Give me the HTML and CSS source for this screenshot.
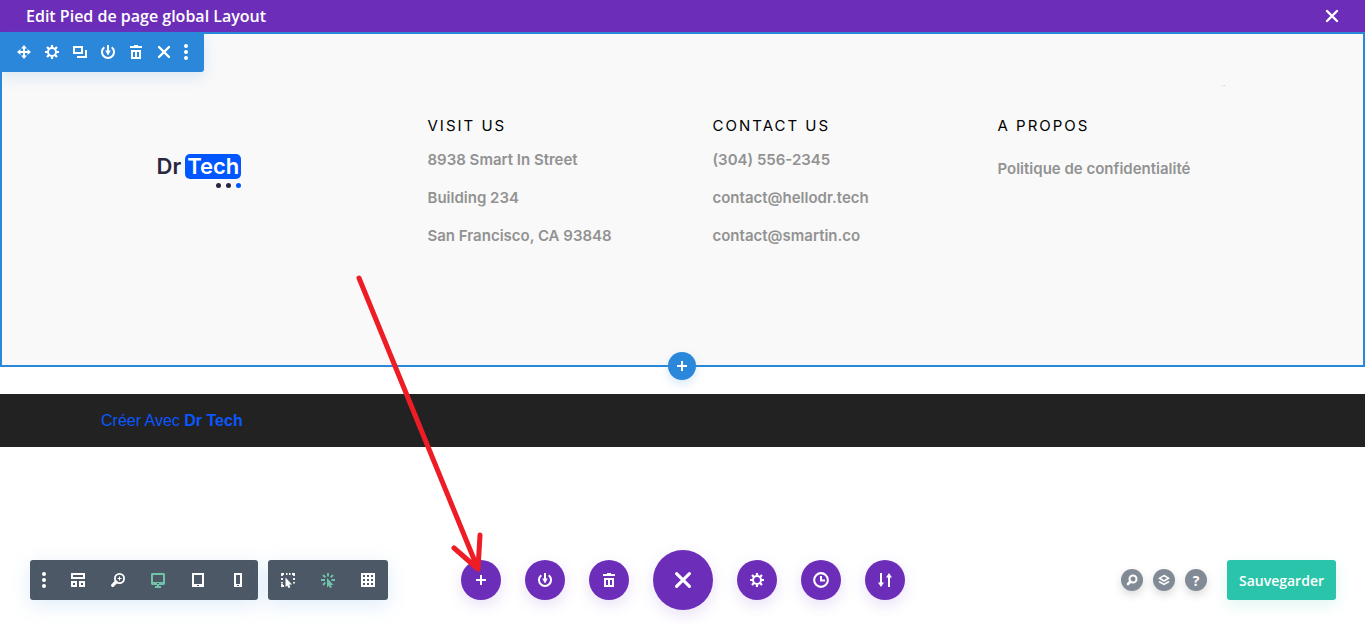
FILE: index.html
```html
<!DOCTYPE html>
<html lang="fr">
<head>
    <meta charset="UTF-8">
    <meta name="viewport" content="width=device-width, initial-scale=1.0">
    <title>Edit Pied de page global Layout</title>
    <link rel="stylesheet" href="styles.css">
</head>
<body>
    <svg class="sprite" aria-hidden="true">
        <symbol id="i-move" viewBox="0 0 14 14">
            <path d="M7 2v10M2 7h10" stroke="currentColor" stroke-width="2"/>
            <path d="M7 0l3 3.500H4zM7 14l3-3.500H4zM0 7l3.500-3v6zM14 7l-3.500-3v6z" fill="currentColor"/>
        </symbol>
        <symbol id="i-gear" viewBox="0 0 14 14">
            <circle cx="7" cy="7" r="4" fill="none" stroke="currentColor" stroke-width="2"/>
            <path d="M7 0v2.500M7 11.500V14M0 7h2.500M11.500 7H14M2 2l2 2M10 10l2 2M12 2l-2 2M4 10l-2 2" stroke="currentColor" stroke-width="2.200"/>
        </symbol>
        <symbol id="i-copy" viewBox="0 0 14 14">
            <path d="M1 2h8v6H1zM13 5v7H4" fill="none" stroke="currentColor" stroke-width="2"/>
        </symbol>
        <symbol id="i-power" viewBox="0 0 14 14">
            <path d="M3.300 2.200A6 6 0 1 0 10.700 2.200" fill="none" stroke="currentColor" stroke-width="2"/>
            <path d="M6 0h2v5.500h1.800L7 10.500 4.200 5.500H6z" fill="currentColor"/>
        </symbol>
        <symbol id="i-trash" viewBox="0 0 14 14">
            <path d="M5 0h4v1h4v2H1V1h4zM2 5h10v9H2zM4 7v5h2V7zM8 7v5h2V7z" fill="currentColor" fill-rule="evenodd"/>
        </symbol>
        <symbol id="i-close" viewBox="0 0 14 14">
            <path d="M2 2l10 10M12 2L2 12" stroke="currentColor" stroke-width="2.400" stroke-linecap="round"/>
        </symbol>
        <symbol id="i-dots" viewBox="0 0 4 16">
            <g fill="currentColor"><circle cx="2" cy="2" r="2"/><circle cx="2" cy="8" r="2"/><circle cx="2" cy="14" r="2"/></g>
        </symbol>
        <symbol id="i-plus" viewBox="0 0 14 14">
            <path d="M7 2v10M2 7h10" stroke="currentColor" stroke-width="2"/>
        </symbol>
        <symbol id="i-wire" viewBox="0 0 14 14">
            <path d="M1 1h12v4H1zM1 9h4v4H1zM9 9h4v4H9z" fill="none" stroke="currentColor" stroke-width="2"/>
        </symbol>
        <symbol id="i-zoom" viewBox="0 0 14 14">
            <circle cx="8.500" cy="5.500" r="4.600" fill="none" stroke="currentColor" stroke-width="1.800"/>
            <path d="M8.500 3.500v4M6.500 5.500h4" stroke="currentColor"/>
            <path d="M5 9l-3.300 3.300" stroke="currentColor" stroke-width="3.200" stroke-linecap="round"/>
        </symbol>
        <symbol id="i-desktop" viewBox="0 0 14 16">
            <path d="M1 1h12l1 1v10l-1 1H8v1h2v2H4v-2h2v-1H1l-1-1V2zM2 3v7h10V3zM6 11v1h2v-1z" fill="currentColor" fill-rule="evenodd"/>
        </symbol>
        <symbol id="i-tablet" viewBox="0 0 14 14">
            <path d="M1 0h12v14H1zM3 2v9h8V2zM6 12v1h2v-1z" fill="currentColor" fill-rule="evenodd"/>
        </symbol>
        <symbol id="i-phone" viewBox="0 0 14 14">
            <path d="M3 0h8v14H3zM5 2v9h4V2zM6 12v1h2v-1z" fill="currentColor" fill-rule="evenodd"/>
        </symbol>
        <symbol id="i-select" viewBox="0 0 14 16">
            <path d="M1 4V2h2M5 2h1.500M8 2h1.500M11 2h2v2M13 6v2M13 10v1.500M1 6v2M1 10v1.500M1 12v2h2" fill="none" stroke="currentColor" stroke-width="1.800"/>
            <path d="M4.500 5.500v9.500l1.700-1.600 1.200 2.600 2-.8-1.200-2.600h2.800z" fill="currentColor"/>
        </symbol>
        <symbol id="i-click" viewBox="0 0 14 16">
            <path d="M7 1v3.500M0 8h4M10.500 8H14M2 3l2.300 2.300M12 3L9.700 5.300M2 13l2.300-2.300" stroke="currentColor" stroke-width="1.900"/>
            <path d="M6 6v9.500l1.800-1.700L9 16l2-.8-1.200-2.200h2.700z" fill="currentColor"/>
        </symbol>
        <symbol id="i-grid" viewBox="0 0 14 14">
            <path d="M0 0h14v14H0zM2 2v2h2V2zM6 2v2h2V2zM10 2v2h2V2zM2 6v2h2V6zM6 6v2h2V6zM10 6v2h2V6zM2 10v2h2v-2zM6 10v2h2v-2zM10 10v2h2v-2z" fill="currentColor" fill-rule="evenodd"/>
        </symbol>
        <symbol id="i-clock" viewBox="0 0 14 14">
            <circle cx="7" cy="7" r="6" fill="none" stroke="currentColor" stroke-width="1.800"/>
            <path d="M7 3.500v4h3.500" fill="none" stroke="currentColor" stroke-width="1.800"/>
        </symbol>
        <symbol id="i-sort" viewBox="0 0 14 14">
            <path d="M3 0v11M11 3v11" stroke="currentColor" stroke-width="2"/>
            <path d="M0 9.500h6L3 14zM8 4.500h6L11 0z" fill="currentColor"/>
        </symbol>
        <symbol id="i-search" viewBox="0 0 14 14">
            <circle cx="8" cy="6" r="3.500" fill="none" stroke="currentColor" stroke-width="2"/>
            <path d="M5.500 8.500L3 11" stroke="currentColor" stroke-width="2.600" stroke-linecap="round"/>
        </symbol>
        <symbol id="i-layers" viewBox="0 0 14 14">
            <path d="M7 2.500l4.500 2.700L7 8 2.500 5.200z" fill="none" stroke="currentColor" stroke-width="1.500"/>
            <path d="M2 8.500l5 3 5-3" fill="none" stroke="currentColor" stroke-width="1.500"/>
        </symbol>
    </svg>

    <header class="topbar">
        <h1>Edit Pied de page global Layout</h1>
        <button type="button" aria-label="Fermer"><svg class="icon"><use href="#i-close"/></svg></button>
    </header>

    <main>
        <section class="section">
            <div class="section-tools">
                <button type="button" aria-label="Déplacer"><svg class="icon"><use href="#i-move"/></svg></button>
                <button type="button" aria-label="Réglages"><svg class="icon"><use href="#i-gear"/></svg></button>
                <button type="button" aria-label="Dupliquer"><svg class="icon"><use href="#i-copy"/></svg></button>
                <button type="button" aria-label="Enregistrer"><svg class="icon"><use href="#i-power"/></svg></button>
                <button type="button" aria-label="Supprimer"><svg class="icon"><use href="#i-trash"/></svg></button>
                <button type="button" aria-label="Fermer"><svg class="icon"><use href="#i-close"/></svg></button>
                <button type="button" class="more" aria-label="Plus"><svg class="icon icon-dots"><use href="#i-dots"/></svg></button>
            </div>

            <div class="row">
                <div class="logo">
                    <div class="logo-name">Dr <span>Tech</span></div>
                    <div class="logo-dots"><i></i><i></i><i></i></div>
                </div>
                <div class="col">
                    <h2>Visit us</h2>
                    <p>8938 Smart In Street</p>
                    <p>Building 234</p>
                    <p>San Francisco, CA 93848</p>
                </div>
                <div class="col">
                    <h2>Contact us</h2>
                    <p>(304) 556-2345</p>
                    <p>contact@hellodr.tech</p>
                    <p>contact@smartin.co</p>
                </div>
                <div class="col">
                    <h2>A propos</h2>
                    <p class="policy"><a href="#">Politique de confidentialité</a></p>
                </div>
            </div>

            <button type="button" class="add-section" aria-label="Ajouter une section"><svg class="icon"><use href="#i-plus"/></svg></button>
        </section>

        <div class="credits"><a href="#">Créer Avec <strong>Dr Tech</strong></a></div>
    </main>

    <footer class="builder-bar">
        <div class="views">
            <div class="group">
                <button type="button" class="more" aria-label="Plus"><svg class="icon icon-dots"><use href="#i-dots"/></svg></button>
                <button type="button" aria-label="Filaire"><svg class="icon"><use href="#i-wire"/></svg></button>
                <button type="button" aria-label="Zoom"><svg class="icon"><use href="#i-zoom"/></svg></button>
                <button type="button" class="active" aria-label="Bureau"><svg class="icon icon-tall"><use href="#i-desktop"/></svg></button>
                <button type="button" aria-label="Tablette"><svg class="icon"><use href="#i-tablet"/></svg></button>
                <button type="button" aria-label="Téléphone"><svg class="icon"><use href="#i-phone"/></svg></button>
            </div>
            <div class="group">
                <button type="button" aria-label="Survol"><svg class="icon icon-tall"><use href="#i-select"/></svg></button>
                <button type="button" class="active" aria-label="Clic"><svg class="icon icon-tall"><use href="#i-click"/></svg></button>
                <button type="button" aria-label="Grille"><svg class="icon"><use href="#i-grid"/></svg></button>
            </div>
        </div>

        <div class="actions">
            <button type="button" aria-label="Ajouter"><svg class="icon"><use href="#i-plus"/></svg></button>
            <button type="button" aria-label="Enregistrer"><svg class="icon"><use href="#i-power"/></svg></button>
            <button type="button" aria-label="Supprimer"><svg class="icon"><use href="#i-trash"/></svg></button>
            <button type="button" class="main" aria-label="Fermer"><svg class="icon icon-lg"><use href="#i-close"/></svg></button>
            <button type="button" aria-label="Réglages"><svg class="icon"><use href="#i-gear"/></svg></button>
            <button type="button" aria-label="Historique"><svg class="icon icon-md"><use href="#i-clock"/></svg></button>
            <button type="button" aria-label="Portabilité"><svg class="icon"><use href="#i-sort"/></svg></button>
        </div>

        <div class="publish">
            <div class="help">
                <button type="button" aria-label="Rechercher"><svg class="icon"><use href="#i-search"/></svg></button>
                <button type="button" aria-label="Calques"><svg class="icon"><use href="#i-layers"/></svg></button>
                <button type="button">?</button>
            </div>
            <button type="button" class="save">Sauvegarder</button>
        </div>
    </footer>

    <svg class="arrow" width="130" height="304" viewBox="0 0 130 304" aria-hidden="true">
        <path d="M5 5L124 296M100 275L124 296L126 262" fill="none" stroke="#ee1c24" stroke-width="5" stroke-linecap="round" stroke-linejoin="round"/>
    </svg>
</body>
</html>
```
FILE: styles.css
```css
* {
    box-sizing: border-box;
}

body {
    margin: 0;
    min-height: 100vh;
    display: flex;
    flex-direction: column;
    position: relative;
    background-color: #fff;
    font-family: 'Open Sans', sans-serif;
}

h1, h2, p {
    margin: 0;
}

a {
    color: inherit;
    text-decoration: none;
}

button {
    display: flex;
    align-items: center;
    justify-content: center;
    padding: 0;
    border: none;
    background: none;
    color: #fff;
    font-family: inherit;
    cursor: pointer;
}

.sprite {
    display: none;
}

.icon {
    display: block;
    width: 14px;
    height: 14px;
}

.icon-md {
    width: 16px;
    height: 16px;
}

.icon-lg {
    width: 18px;
    height: 18px;
}

.icon-tall {
    height: 16px;
}

.icon-dots {
    width: 4px;
    height: 16px;
}

/* title bar */
.topbar {
    display: flex;
    align-items: center;
    justify-content: space-between;
    height: 32px;
    padding: 0 26px;
    background-color: #6c2eb9;
    color: #fff;
}

.topbar h1 {
    font-size: 16px;
    font-weight: 600;
}

/* edited section */
.section {
    position: relative;
    padding: 77px 20px 110px;
    border: 2px solid #2b87da;
    background-color: #f9f9f9;
}

.section::after {
    content: '';
    position: absolute;
    top: 51px;
    right: 138px;
    width: 3px;
    border-top: 1px dotted #c3d8d4;
}

.section-tools {
    position: absolute;
    top: -2px;
    left: -2px;
    display: flex;
    height: 40px;
    padding: 0 10px;
    border-radius: 0 0 3px 0;
    background-color: #2b87da;
    box-shadow: 0 5px 15px rgba(43, 135, 218, 0.15);
}

.section-tools button {
    width: 28px;
}

.section-tools .more {
    width: 16px;
}

.row {
    display: grid;
    grid-template-columns: repeat(4, 1fr);
    gap: 60px;
    max-width: 1080px;
    margin: 0 auto;
}

.col h2 {
    font-family: Inter, sans-serif;
    font-size: 15px;
    font-weight: 400;
    line-height: 30px;
    letter-spacing: 2px;
    text-transform: uppercase;
    color: #000;
}

.col p {
    font-family: Inter, sans-serif;
    font-size: 15px;
    font-weight: 600;
    line-height: 38px;
    color: #929292;
    white-space: nowrap;
}

.col .policy {
    padding-top: 9px;
}

.logo {
    width: 102px;
    padding: 43px 0 0 14px;
}

.logo-name {
    display: flex;
    align-items: center;
    gap: 4px;
    font-family: Inter, sans-serif;
    font-size: 22px;
    font-weight: 600;
    line-height: 25px;
    color: #292640;
}

.logo-name span {
    padding: 0 2px;
    border-radius: 5px;
    background-color: #0157ff;
    color: #fff;
}

.logo-dots {
    display: flex;
    justify-content: flex-end;
    gap: 5px;
    padding: 4px 4px 0 0;
}

.logo-dots i {
    width: 5px;
    height: 5px;
    border-radius: 50%;
    background-color: #292640;
}

.logo-dots i:last-child {
    background-color: #0157ff;
}

.add-section {
    position: absolute;
    bottom: -15px;
    left: 50%;
    width: 28px;
    height: 28px;
    margin-left: -15px;
    border-radius: 50%;
    background-color: #2b87da;
    box-shadow: 0 4px 10px rgba(43, 135, 218, 0.2);
}

.credits {
    margin-top: 27px;
    padding: 0 101px;
    background-color: #222;
    color: #0b57ff;
    font-family: 'Liberation Sans', Arial, sans-serif;
    font-size: 16px;
    line-height: 53px;
}

/* bottom builder bar */
.builder-bar {
    display: grid;
    grid-template-columns: 1fr auto 1fr;
    align-items: center;
    margin-top: auto;
    padding: 0 29px 15px 30px;
}

.views {
    display: flex;
    gap: 10px;
}

.group {
    display: flex;
    height: 40px;
    border-radius: 3px;
    background-color: #4c5866;
    box-shadow: 0 5px 20px rgba(43, 135, 218, 0.15);
}

.group button {
    width: 40px;
}

.group .more {
    width: 28px;
}

.group .active {
    color: #70c3a9;
}

.actions {
    display: flex;
    align-items: center;
    gap: 24px;
}

.actions button {
    width: 40px;
    height: 40px;
    border-radius: 50%;
    background-color: #6c2eb9;
    box-shadow: 0 5px 15px rgba(108, 46, 185, 0.15);
}

.actions .main {
    width: 60px;
    height: 60px;
}

.publish {
    display: flex;
    align-items: center;
    justify-content: flex-end;
    gap: 20px;
}

.help {
    display: flex;
    gap: 10px;
}

.help button {
    width: 22px;
    height: 22px;
    border-radius: 50%;
    background-color: #828a96;
    box-shadow: 0 4px 10px rgba(0, 0, 0, 0.15);
    font-size: 14px;
    font-weight: 700;
}

.save {
    height: 40px;
    padding: 0 12px;
    border-radius: 3px;
    background-color: #29c4a9;
    box-shadow: 0 5px 15px rgba(41, 196, 169, 0.15);
    font-size: 14px;
    font-weight: 600;
}

/* hand-drawn pointer over the page */
.arrow {
    position: absolute;
    top: 273px;
    left: 354px;
    pointer-events: none;
}
```
